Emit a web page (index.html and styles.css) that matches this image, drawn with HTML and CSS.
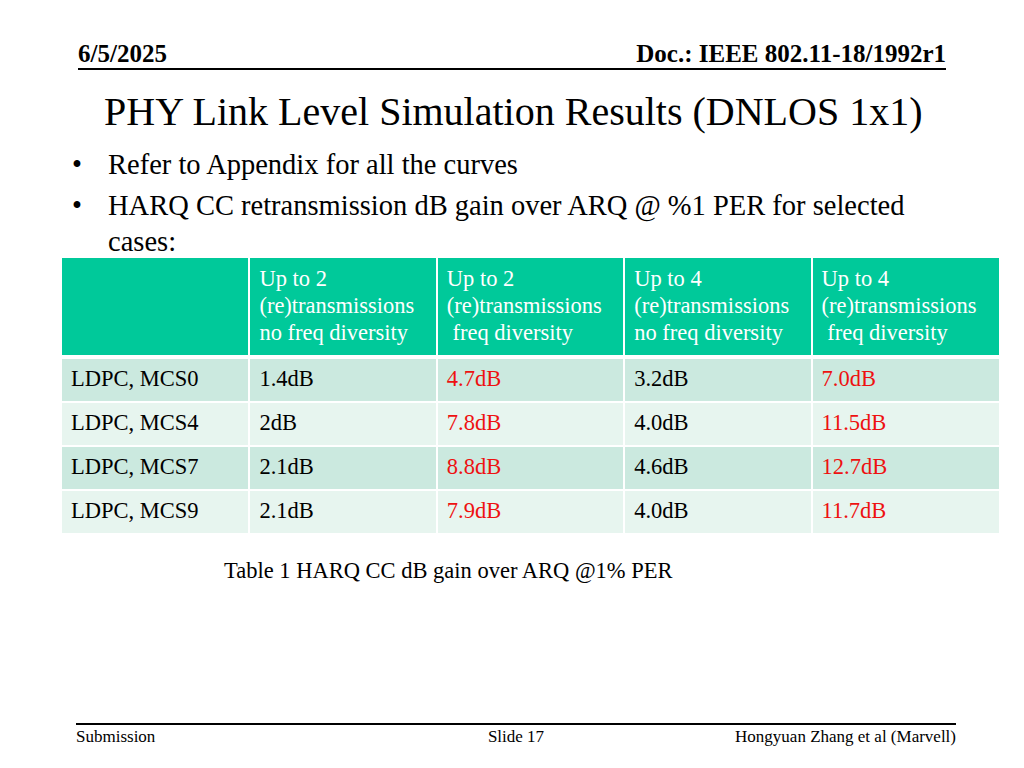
FILE: index.html
```html
<!DOCTYPE html>
<html>
<head>
<meta charset="utf-8">
<link rel="stylesheet" href="styles.css">
</head>
<body>
<div class="slide">
  <header class="top">
    <span>6/5/2025</span>
    <span>Doc.: IEEE 802.11-18/1992r1</span>
  </header>
  <h1 class="title">PHY Link Level Simulation Results (DNLOS 1x1)</h1>
  <ul class="bullets">
    <li>Refer to Appendix for all the curves</li>
    <li>HARQ CC retransmission dB gain over ARQ @ %1 PER for selected cases:</li>
  </ul>
  <table class="results">
    <thead>
      <tr>
        <th></th>
        <th>Up to 2<br>(re)transmissions<br>no freq diversity</th>
        <th>Up to 2<br>(re)transmissions<br>&nbsp;freq diversity</th>
        <th>Up to 4<br>(re)transmissions<br>no freq diversity</th>
        <th>Up to 4<br>(re)transmissions<br>&nbsp;freq diversity</th>
      </tr>
    </thead>
    <tbody>
      <tr class="odd"><td>LDPC, MCS0</td><td>1.4dB</td><td class="red">4.7dB</td><td>3.2dB</td><td class="red">7.0dB</td></tr>
      <tr class="even"><td>LDPC, MCS4</td><td>2dB</td><td class="red">7.8dB</td><td>4.0dB</td><td class="red">11.5dB</td></tr>
      <tr class="odd"><td>LDPC, MCS7</td><td>2.1dB</td><td class="red">8.8dB</td><td>4.6dB</td><td class="red">12.7dB</td></tr>
      <tr class="even"><td>LDPC, MCS9</td><td>2.1dB</td><td class="red">7.9dB</td><td>4.0dB</td><td class="red">11.7dB</td></tr>
    </tbody>
  </table>
  <p class="caption">Table 1 HARQ CC dB gain over ARQ @1% PER</p>
  <footer class="bottom">
    <span class="f-left">Submission</span>
    <span class="f-mid">Slide 17</span>
    <span class="f-right">Hongyuan Zhang et al (Marvell)</span>
  </footer>
</div>
</body>
</html>
```

FILE: styles.css
```css
html, body {
  margin: 0;
  padding: 0;
  background: #fff;
}
body {
  font-family: "Liberation Serif", "Times New Roman", serif;
  color: #000;
}
.slide {
  width: 1024px;
  height: 768px;
  display: flex;
  flex-direction: column;
  box-sizing: border-box;
  padding-top: 41px;
  padding-bottom: 21px;
}
.top {
  margin-left: 78px;
  width: 868px;
  display: flex;
  justify-content: space-between;
  align-items: flex-end;
  font-weight: bold;
  font-size: 25px;
  line-height: 25px;
  padding-bottom: 2px;
  border-bottom: 2px solid #000;
}
.title {
  margin: 22px 0 0 104px;
  font-weight: normal;
  font-size: 40px;
  line-height: 40px;
}
.bullets {
  list-style: none;
  margin: 15px 0 0 0;
  padding: 0 0 0 108px;
  width: 840px;
  font-size: 28.5px;
  line-height: 36px;
}
.bullets li {
  position: relative;
  margin-top: 5px;
}
.bullets li:first-child {
  margin-top: 0;
}
.bullets li::before {
  content: "\2022";
  position: absolute;
  left: -36px;
  top: 0;
}
.results {
  margin: -2px 0 0 62px;
  width: 937px;
  border-collapse: collapse;
  table-layout: fixed;
  font-size: 22.5px;
}
.results th,
.results td {
  border: 2px solid #fff;
  text-align: left;
  vertical-align: top;
  padding: 0 0 0 9px;
}
.results tr > :first-child { border-left: none; }
.results tr > :last-child { border-right: none; }
.results thead th {
  border-top: none;
  background: #00c99a;
  color: #fff;
  font-weight: normal;
  line-height: 27px;
  height: 81px;
  padding-top: 7px;
  padding-bottom: 9px;
  border-bottom-width: 4px;
}
.results tbody td {
  height: 42px;
  line-height: 40px;
}
.results tbody tr:last-child td { border-bottom: none; }
.odd td { background: #cbe9df; }
.even td { background: #e7f5ef; }
.results td.red { color: #ee1111; }
.caption {
  margin: 23px 0 0 224px;
  font-size: 22.5px;
  line-height: 30px;
}
.bottom {
  margin-top: auto;
  margin-left: 76px;
  width: 880px;
  display: grid;
  grid-template-columns: 1fr auto 1fr;
  border-top: 2px solid #000;
  padding-top: 2px;
  font-size: 17px;
  line-height: 20px;
}
.f-right { text-align: right; }
```
